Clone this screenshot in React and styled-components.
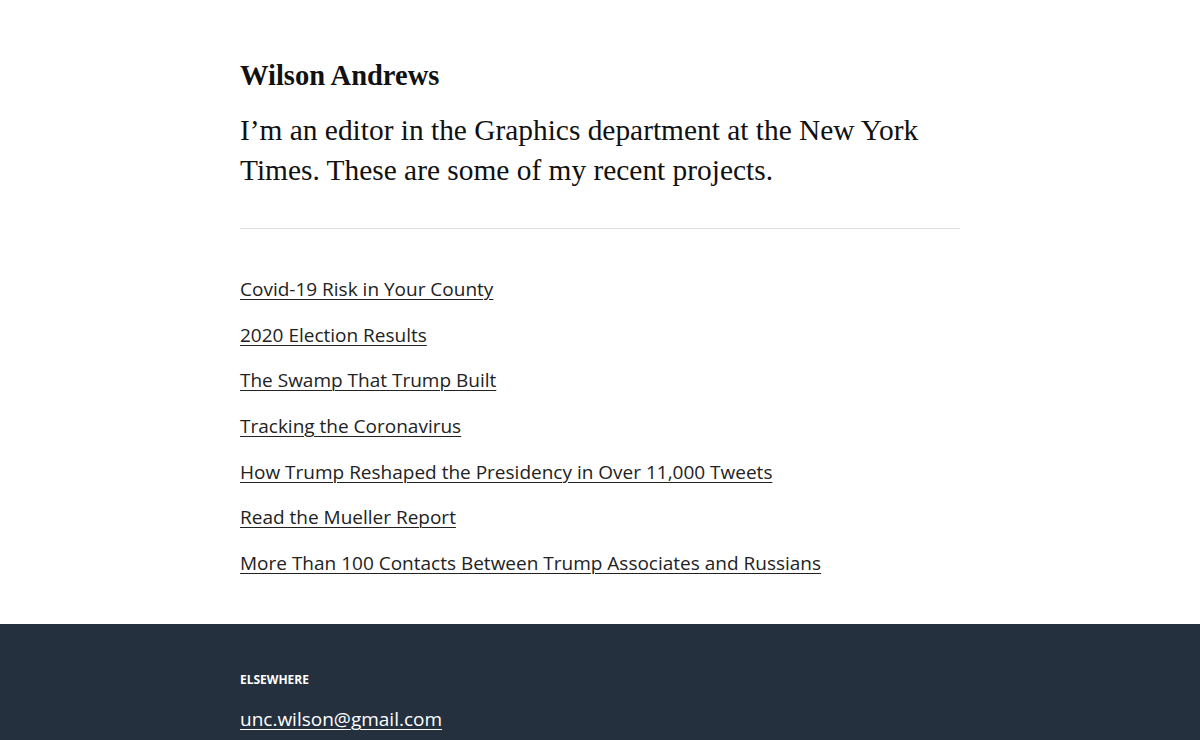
import React from "react";
import styled, { createGlobalStyle } from "styled-components";

const GlobalStyle = createGlobalStyle`
  html, body {
    margin: 0;
    padding: 0;
    background: #fff;
    color: #111;
  }
`;

const projects = [
  "Covid-19 Risk in Your County",
  "2020 Election Results",
  "The Swamp That Trump Built",
  "Tracking the Coronavirus",
  "How Trump Reshaped the Presidency in Over 11,000 Tweets",
  "Read the Mueller Report",
  "More Than 100 Contacts Between Trump Associates and Russians",
];

const App = () => {
  return (
    <>
      <GlobalStyle />
      <Main>
        <Wrap>
          <Name>Wilson Andrews</Name>
          <Intro>
            I’m an editor in the Graphics department at the New York Times.
            These are some of my recent projects.
          </Intro>
          <Rule />
          <ProjectList>
            {projects.map((title) => (
              <li key={title}>
                <ProjectLink href="#">{title}</ProjectLink>
              </li>
            ))}
          </ProjectList>
        </Wrap>
      </Main>
      <Footer>
        <Wrap>
          <FooterLabel>Elsewhere</FooterLabel>
          <FooterLink href="#">unc.wilson@gmail.com</FooterLink>
        </Wrap>
      </Footer>
    </>
  );
};

const Main = styled.main`
  padding: 58px 0 45px;
`;

const Wrap = styled.div`
  width: 720px;
  margin: 0 auto;
`;

const Name = styled.h1`
  font-family: "Liberation Serif", serif;
  font-weight: bold;
  font-size: 28.5px;
  line-height: 36px;
  margin: 0 0 16px;
  color: #111;
`;

const Intro = styled.p`
  font-family: "Liberation Serif", serif;
  font-size: 29.4px;
  line-height: 40px;
  margin: 0 0 38px;
  color: #111;
`;

const Rule = styled.hr`
  border: none;
  border-top: 1px solid #ddd;
  margin: 0 0 46px;
`;

const ProjectList = styled.ul`
  list-style: none;
  margin: 0;
  padding: 0;
  display: flex;
  flex-direction: column;
  gap: 15.7px;

  li {
    line-height: 28px;
  }
`;

const ProjectLink = styled.a`
  font-family: "Open Sans", sans-serif;
  font-size: 19px;
  color: #222;
  text-decoration: underline;
  text-underline-offset: 3px;
  text-decoration-thickness: 1px;
`;

const Footer = styled.footer`
  background: #24303e;
  padding: 47px 0 40px;
`;

const FooterLabel = styled.h2`
  font-family: "Open Sans", sans-serif;
  font-size: 12px;
  font-weight: 700;
  text-transform: uppercase;
  color: #fff;
  margin: 0 0 17px;
  line-height: 18px;
`;

const FooterLink = styled.a`
  font-family: "Open Sans", sans-serif;
  font-size: 19px;
  color: #fff;
  text-decoration: underline;
  text-underline-offset: 3px;
  text-decoration-thickness: 1px;
`;

export default App;
